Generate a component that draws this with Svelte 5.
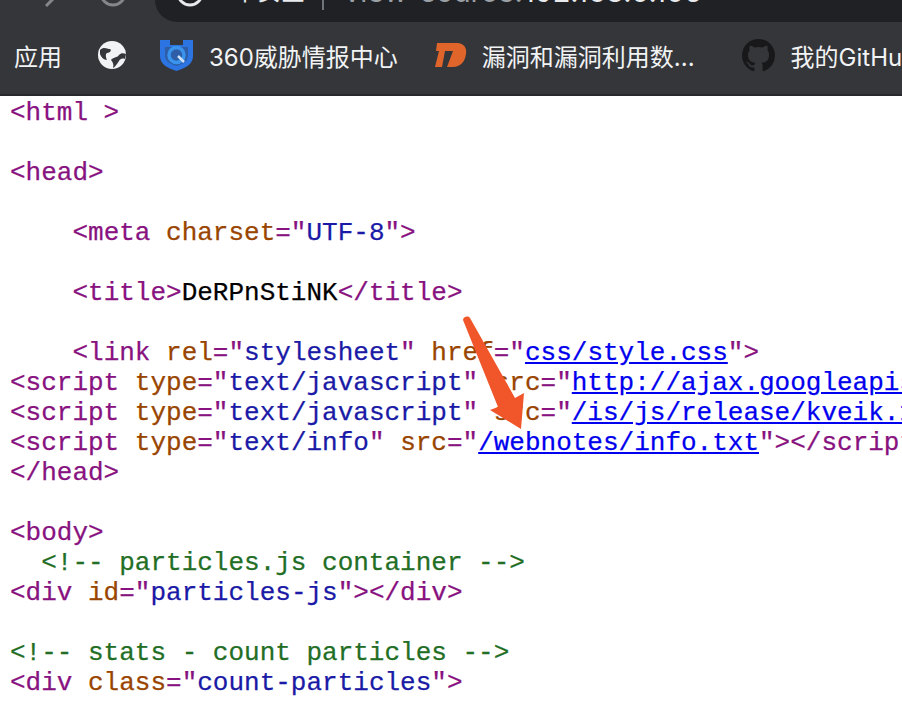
<script>
  // t: tag, a: attr name, v: attr value, l: link, c: comment, x: plain text
  const lines = [
    [["t", "<html >"]],
    [],
    [["t", "<head>"]],
    [],
    [["x", "    "], ["t", "<meta "], ["a", "charset"], ["t", "=\""], ["v", "UTF-8"], ["t", "\">"]],
    [],
    [["x", "    "], ["t", "<title>"], ["x", "DeRPnStiNK"], ["t", "</title>"]],
    [],
    [["x", "    "], ["t", "<link "], ["a", "rel"], ["t", "=\""], ["v", "stylesheet"], ["t", "\" "], ["a", "href"], ["t", "=\""], ["l", "css/style.css"], ["t", "\">"]],
    [["t", "<script "], ["a", "type"], ["t", "=\""], ["v", "text/javascript"], ["t", "\" "], ["a", "src"], ["t", "=\""], ["l", "http://ajax.googleapis.com/ajax/libs"], ["t", "\">"]],
    [["t", "<script "], ["a", "type"], ["t", "=\""], ["v", "text/javascript"], ["t", "\" "], ["a", "src"], ["t", "=\""], ["l", "/is/js/release/kveik.1.4.24.js"], ["t", "\">"]],
    [["t", "<script "], ["a", "type"], ["t", "=\""], ["v", "text/info"], ["t", "\" "], ["a", "src"], ["t", "=\""], ["l", "/webnotes/info.txt"], ["t", "\"></" + "script>"]],
    [["t", "</head>"]],
    [],
    [["t", "<body>"]],
    [["x", "  "], ["c", "<!-- particles.js container -->"]],
    [["t", "<div "], ["a", "id"], ["t", "=\""], ["v", "particles-js"], ["t", "\"></div>"]],
    [],
    [["c", "<!-- stats - count particles -->"]],
    [["t", "<div "], ["a", "class"], ["t", "=\""], ["v", "count-particles"], ["t", "\">"]],
    []
  ];
</script>

<div class="page">
  <header class="chrome">
    <div class="topbar">
      <div class="nav">
        <svg width="14" height="22" viewBox="0 0 14 22" class="fwd"><path d="M1 6 L8 -1" /></svg>
        <svg width="28" height="22" viewBox="0 0 28 22" class="reload"><circle cx="14" cy="-7" r="12" /></svg>
      </div>
      <div class="omnibox">
        <svg width="28" height="22" viewBox="0 0 28 22" class="info"><circle cx="14" cy="-7" r="12" /></svg>
        <span class="insecure">不安全</span>
        <span class="sep"></span>
        <span class="url"><span class="dim">view-source:</span>192.168.0.105</span>
      </div>
    </div>
    <nav class="bookmarks">
      <span class="mark apps">应用</span>
      <svg class="globe" width="28" height="28" viewBox="0 0 28 28">
        <circle cx="14" cy="14" r="14" fill="#f1f3f4" />
        <path d="M2 9 C6 5 9 8 12 8 C14 9 12 12 9 12 C7 13 8 17 9 19 C6 19 3 16 2 13 Z" fill="#35363a" />
        <path d="M13 19 C15 16 19 17 21 14 C23 12 25 12 28 13 L27 18 C24 17 22 18 21 20 C19 23 17 26 15 27 C16 24 15 21 13 19 Z" fill="#35363a" />
      </svg>
      <span class="mark mark-360">
        <svg width="33" height="33" viewBox="0 0 33 33">
          <path d="M0 1 H10 V6 H23 V1 H33 V17 C33 25 26 29 16.5 32 C7 29 0 25 0 17 Z" fill="#2b74e2" />
          <path d="M5 8 H28 V17 C28 22 23 25 16.5 27 C10 25 5 22 5 17 Z" fill="#35363a" opacity="0.35" />
          <circle cx="16.5" cy="16" r="7.5" fill="none" stroke="#3a94ee" stroke-width="3.5" />
          <path d="M18 17 L24 23" stroke="#cfe3fa" stroke-width="2.5" />
        </svg>
        360威胁情报中心
      </span>
      <span class="mark mark-vuln">
        <svg width="32" height="24" viewBox="0 0 32 24">
          <path d="M2 0 H22 C29 0 32 5 31 11 C30 19 25 24 18 24 H12 L18 8 H10 L7 24 H0 L4 8 H1 Z" fill="#e0652b" />
        </svg>
        漏洞和漏洞利用数...
      </span>
      <span class="mark mark-gh">
        <svg width="33" height="33" viewBox="0 0 16 16">
          <path fill="#18181a" d="M8 0C3.58 0 0 3.58 0 8c0 3.54 2.29 6.53 5.47 7.59.4.07.55-.17.55-.38 0-.19-.01-.82-.01-1.49-2.01.37-2.53-.49-2.69-.94-.09-.23-.48-.94-.82-1.13-.28-.15-.68-.52-.01-.53.63-.01 1.08.58 1.23.82.72 1.21 1.87.87 2.33.66.07-.52.28-.87.51-1.07-1.78-.2-3.64-.89-3.64-3.95 0-.87.31-1.59.82-2.15-.08-.2-.36-1.02.08-2.12 0 0 .67-.21 2.2.82.64-.18 1.32-.27 2-.27s1.36.09 2 .27c1.53-1.04 2.2-.82 2.2-.82.44 1.1.16 1.92.08 2.12.51.56.82 1.27.82 2.15 0 3.07-1.87 3.75-3.65 3.95.29.25.54.73.54 1.48 0 1.07-.01 1.93-.01 2.2 0 .21.15.46.55.38A8.01 8.01 0 0 0 16 8c0-4.42-3.58-8-8-8z" />
        </svg>
        我的GitHub
      </span>
    </nav>
  </header>

  <main class="source">
    {#each lines as line}
      <div class="line">{#each line as [k, s]}<span class={k}>{s}</span>{/each}</div>
    {/each}
    <svg class="arrow" width="70" height="122" viewBox="0 0 70 122">
      <path d="M0 5 C0 2 5 0 7 3 L52 83 L61 78 L58 114 L27 95 L35 92 Z" fill="#f0562a" />
    </svg>
  </main>
</div>

<style>
  :global(body) {
    background: #fff;
  }

  .page {
    width: 902px;
    height: 726px;
    overflow: hidden;
    font-family: "Inter", "Noto Sans CJK SC", sans-serif;
  }

  .chrome {
    height: 94px;
    background: #35363a;
    border-bottom: 2px solid #27282b;
    display: flex;
    flex-direction: column;
  }

  .topbar {
    height: 22px;
    display: flex;
    overflow: hidden;
  }

  .nav {
    width: 155px;
    display: flex;
    padding-left: 45px;
    box-sizing: border-box;
    gap: 40px;
  }

  .nav path, .nav circle {
    fill: none;
    stroke: #85878a;
    stroke-width: 3;
  }

  .omnibox {
    flex: 1;
    background: #202124;
    border-bottom-left-radius: 22px;
    display: flex;
    align-items: flex-start;
    padding-left: 21px;
    white-space: nowrap;
    font-size: 29px;
    color: #e8eaed;
    line-height: 30px;
  }

  .info {
    flex: none;
  }

  .info circle {
    fill: none;
    stroke: #e8eaed;
    stroke-width: 3;
  }

  .insecure {
    margin: -23px 0 0 29px;
    font-size: 24px;
  }

  .sep {
    width: 2px;
    height: 10px;
    margin: 0 20px 0 17px;
    background: #70757a;
  }

  .url {
    margin-top: -23px;
  }

  .dim {
    color: #9aa0a6;
  }

  .bookmarks {
    flex: 1;
    display: flex;
    align-items: center;
    color: #f1f3f4;
    font-size: 24px;
    white-space: nowrap;
    padding: 0 0 6px 14px;
    overflow: hidden;
  }

  .bookmarks svg {
    flex: none;
  }

  .mark {
    display: flex;
    align-items: center;
    flex: none;
  }

  .globe {
    margin-left: 36px;
  }

  .mark-360 {
    margin-left: 34px;
    gap: 16px;
  }

  .mark-vuln {
    margin-left: 37px;
    gap: 15px;
  }

  .mark-gh {
    margin-left: 47px;
    gap: 16px;
  }

  .source {
    position: relative;
    font-family: "Liberation Mono", monospace;
    font-size: 26px;
    line-height: 30px;
    padding: 2px 0 0 10px;
    color: #000;
    white-space: pre;
    overflow: hidden;
    -webkit-text-stroke: 0.25px;
  }

  .line {
    height: 30px;
  }

  .t { color: #881280; }
  .a { color: #994500; }
  .v { color: #1a1aa6; }
  .l { color: #0000ee; text-decoration: underline; }
  .c { color: #236e25; }

  .arrow {
    position: absolute;
    left: 463px;
    top: 219px;
  }
</style>
